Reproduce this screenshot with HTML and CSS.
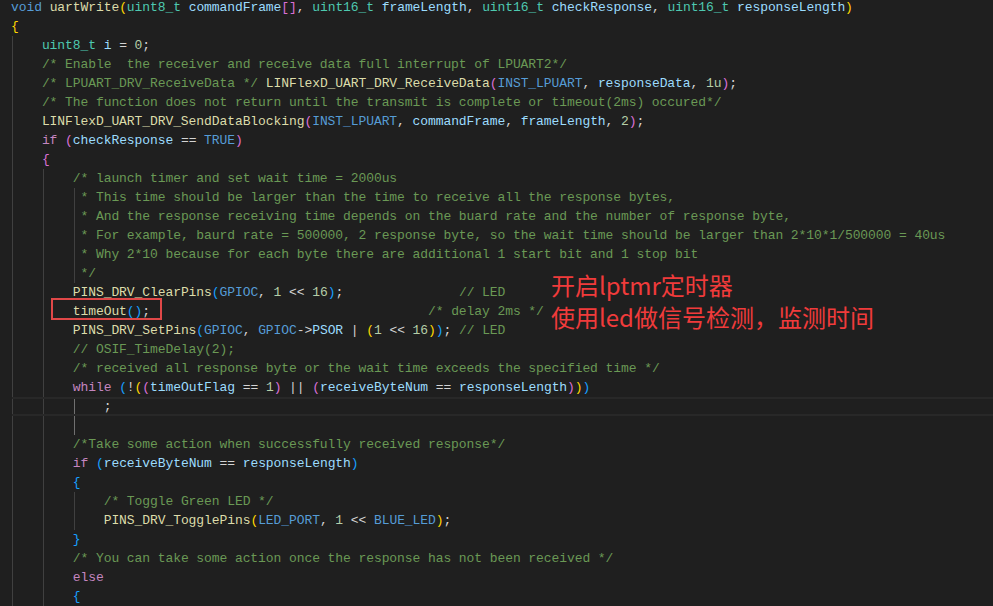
FILE: index.html
```html
<!DOCTYPE html>
<html lang="en">
<head>
<meta charset="utf-8">
<title>uartWrite</title>
<link rel="stylesheet" href="styles.css">
</head>
<body>
<div class="editor">
<div class="ln"><span class="k">void</span> <span class="f">uartWrite</span><span class="b1">(</span><span class="t">uint8_t</span> <span class="v">commandFrame</span><span class="b2">[]</span>, <span class="t">uint16_t</span> <span class="v">frameLength</span>, <span class="t">uint16_t</span> <span class="v">checkResponse</span>, <span class="t">uint16_t</span> <span class="v">responseLength</span><span class="b1">)</span></div>
<div class="ln"><span class="b1">{</span></div>
<div class="ln"><span class="g">    </span><span class="t">uint8_t</span> <span class="v">i</span> = <span class="n">0</span>;</div>
<div class="ln"><span class="g">    </span><span class="m">/* Enable  the receiver and receive data full interrupt of LPUART2*/</span></div>
<div class="ln"><span class="g">    </span><span class="m">/* LPUART_DRV_ReceiveData */</span> <span class="f">LINFlexD_UART_DRV_ReceiveData</span><span class="b2">(</span><span class="d">INST_LPUART</span>, <span class="v">responseData</span>, <span class="n">1u</span><span class="b2">)</span>;</div>
<div class="ln"><span class="g">    </span><span class="m">/* The function does not return until the transmit is complete or timeout(2ms) occured*/</span></div>
<div class="ln"><span class="g">    </span><span class="f">LINFlexD_UART_DRV_SendDataBlocking</span><span class="b2">(</span><span class="d">INST_LPUART</span>, <span class="v">commandFrame</span>, <span class="v">frameLength</span>, <span class="n">2</span><span class="b2">)</span>;</div>
<div class="ln"><span class="g">    </span><span class="c">if</span> <span class="b2">(</span><span class="v">checkResponse</span> == <span class="d">TRUE</span><span class="b2">)</span></div>
<div class="ln"><span class="g">    </span><span class="b2">{</span></div>
<div class="ln"><span class="g">    </span><span class="g">    </span><span class="m">/* launch timer and set wait time = 2000us</span></div>
<div class="ln"><span class="g">    </span><span class="g">    </span><span class="g"> </span><span class="m">* This time should be larger than the time to receive all the response bytes,</span></div>
<div class="ln"><span class="g">    </span><span class="g">    </span><span class="g"> </span><span class="m">* And the response receiving time depends on the buard rate and the number of response byte,</span></div>
<div class="ln"><span class="g">    </span><span class="g">    </span><span class="g"> </span><span class="m">* For example, baurd rate = 500000, 2 response byte, so the wait time should be larger than 2*10*1/500000 = 40us</span></div>
<div class="ln"><span class="g">    </span><span class="g">    </span><span class="g"> </span><span class="m">* Why 2*10 because for each byte there are additional 1 start bit and 1 stop bit</span></div>
<div class="ln"><span class="g">    </span><span class="g">    </span><span class="g"> </span><span class="m">*/</span></div>
<div class="ln"><span class="g">    </span><span class="g">    </span><span class="f">PINS_DRV_ClearPins</span><span class="b3">(</span><span class="d">GPIOC</span>, <span class="n">1</span> &lt;&lt; <span class="n">16</span><span class="b3">)</span>;               <span class="m">// LED</span></div>
<div class="ln"><span class="g">    </span><span class="g">    </span><span class="f">timeOut</span><span class="b3">()</span>;                                    <span class="m">/* delay 2ms */</span><span class="box"></span></div>
<div class="ln"><span class="g">    </span><span class="g">    </span><span class="f">PINS_DRV_SetPins</span><span class="b3">(</span><span class="d">GPIOC</span>, <span class="d">GPIOC</span>-&gt;<span class="v">PSOR</span> | <span class="b1">(</span><span class="n">1</span> &lt;&lt; <span class="n">16</span><span class="b1">)</span><span class="b3">)</span>; <span class="m">// LED</span></div>
<div class="ln"><span class="g">    </span><span class="g">    </span><span class="m">// OSIF_TimeDelay(2);</span></div>
<div class="ln"><span class="g">    </span><span class="g">    </span><span class="m">/* received all response byte or the wait time exceeds the specified time */</span></div>
<div class="ln"><span class="g">    </span><span class="g">    </span><span class="c">while</span> <span class="b3">(</span>!<span class="b1">(</span><span class="b2">(</span><span class="v">timeOutFlag</span> == <span class="n">1</span><span class="b2">)</span> || <span class="b2">(</span><span class="v">receiveByteNum</span> == <span class="v">responseLength</span><span class="b2">)</span><span class="b1">)</span><span class="b3">)</span></div>
<div class="ln cur"><span class="g">    </span><span class="g">    </span><span class="g a">    </span>;</div>
<div class="ln"><span class="g">    </span><span class="g">    </span><span class="g a">    </span></div>
<div class="ln"><span class="g">    </span><span class="g">    </span><span class="m">/*Take some action when successfully received response*/</span></div>
<div class="ln"><span class="g">    </span><span class="g">    </span><span class="c">if</span> <span class="b3">(</span><span class="v">receiveByteNum</span> == <span class="v">responseLength</span><span class="b3">)</span></div>
<div class="ln"><span class="g">    </span><span class="g">    </span><span class="b3">{</span></div>
<div class="ln"><span class="g">    </span><span class="g">    </span><span class="g">    </span><span class="m">/* Toggle Green LED */</span></div>
<div class="ln"><span class="g">    </span><span class="g">    </span><span class="g">    </span><span class="f">PINS_DRV_TogglePins</span><span class="b1">(</span><span class="d">LED_PORT</span>, <span class="n">1</span> &lt;&lt; <span class="d">BLUE_LED</span><span class="b1">)</span>;</div>
<div class="ln"><span class="g">    </span><span class="g">    </span><span class="b3">}</span></div>
<div class="ln"><span class="g">    </span><span class="g">    </span><span class="m">/* You can take some action once the response has not been received */</span></div>
<div class="ln"><span class="g">    </span><span class="g">    </span><span class="c">else</span></div>
<div class="ln"><span class="g">    </span><span class="g">    </span><span class="b3">{</span></div>
</div>
<div class="note">
<div>开启lptmr定时器</div>
<div>使用led做信号检测，监测时间</div>
</div>
</body>
</html>
```

FILE: styles.css
```css
html, body {
  margin: 0;
  padding: 0;
  background: #1f1f1f;
  overflow: hidden;
}

body {
  width: 993px;
  height: 606px;
  position: relative;
}

.editor {
  margin-top: -2px;
  font-family: "Liberation Mono", "DejaVu Sans Mono", monospace;
  font-size: 13px;
  letter-spacing: -0.08px;
  color: #d4d4d4;
}

.ln {
  position: relative;
  height: 19px;
  line-height: 19px;
  padding-left: 11px;
  white-space: pre;
}

.g {
  display: inline-block;
  height: 19px;
  vertical-align: top;
  background: linear-gradient(#404040, #404040) no-repeat 1px 0 / 1px 100%;
}

.g.a {
  background-image: linear-gradient(#707070, #707070);
}

.cur::before {
  content: "";
  position: absolute;
  left: 12px;
  right: 0;
  top: 0;
  bottom: 0;
  border-top: 2px solid #282828;
  border-bottom: 2px solid #282828;
  pointer-events: none;
}

.k { color: #569cd6; }
.c { color: #c586c0; }
.t { color: #4ec9b0; }
.v { color: #9cdcfe; }
.f { color: #dcdcaa; }
.m { color: #6a9955; }
.n { color: #b5cea8; }
.d { color: #569cd6; }
.b1 { color: #ffd700; }
.b2 { color: #da70d6; }
.b3 { color: #179fff; }

.box {
  position: absolute;
  left: 51px;
  top: -4px;
  width: 107px;
  height: 18px;
  border: 2px solid #e04848;
}

.note {
  position: absolute;
  left: 551px;
  top: 269px;
  font-family: "Noto Sans CJK SC", "Noto Sans", sans-serif;
  font-size: 24px;
  line-height: 32px;
  color: #f03b3b;
  white-space: nowrap;
}
```
